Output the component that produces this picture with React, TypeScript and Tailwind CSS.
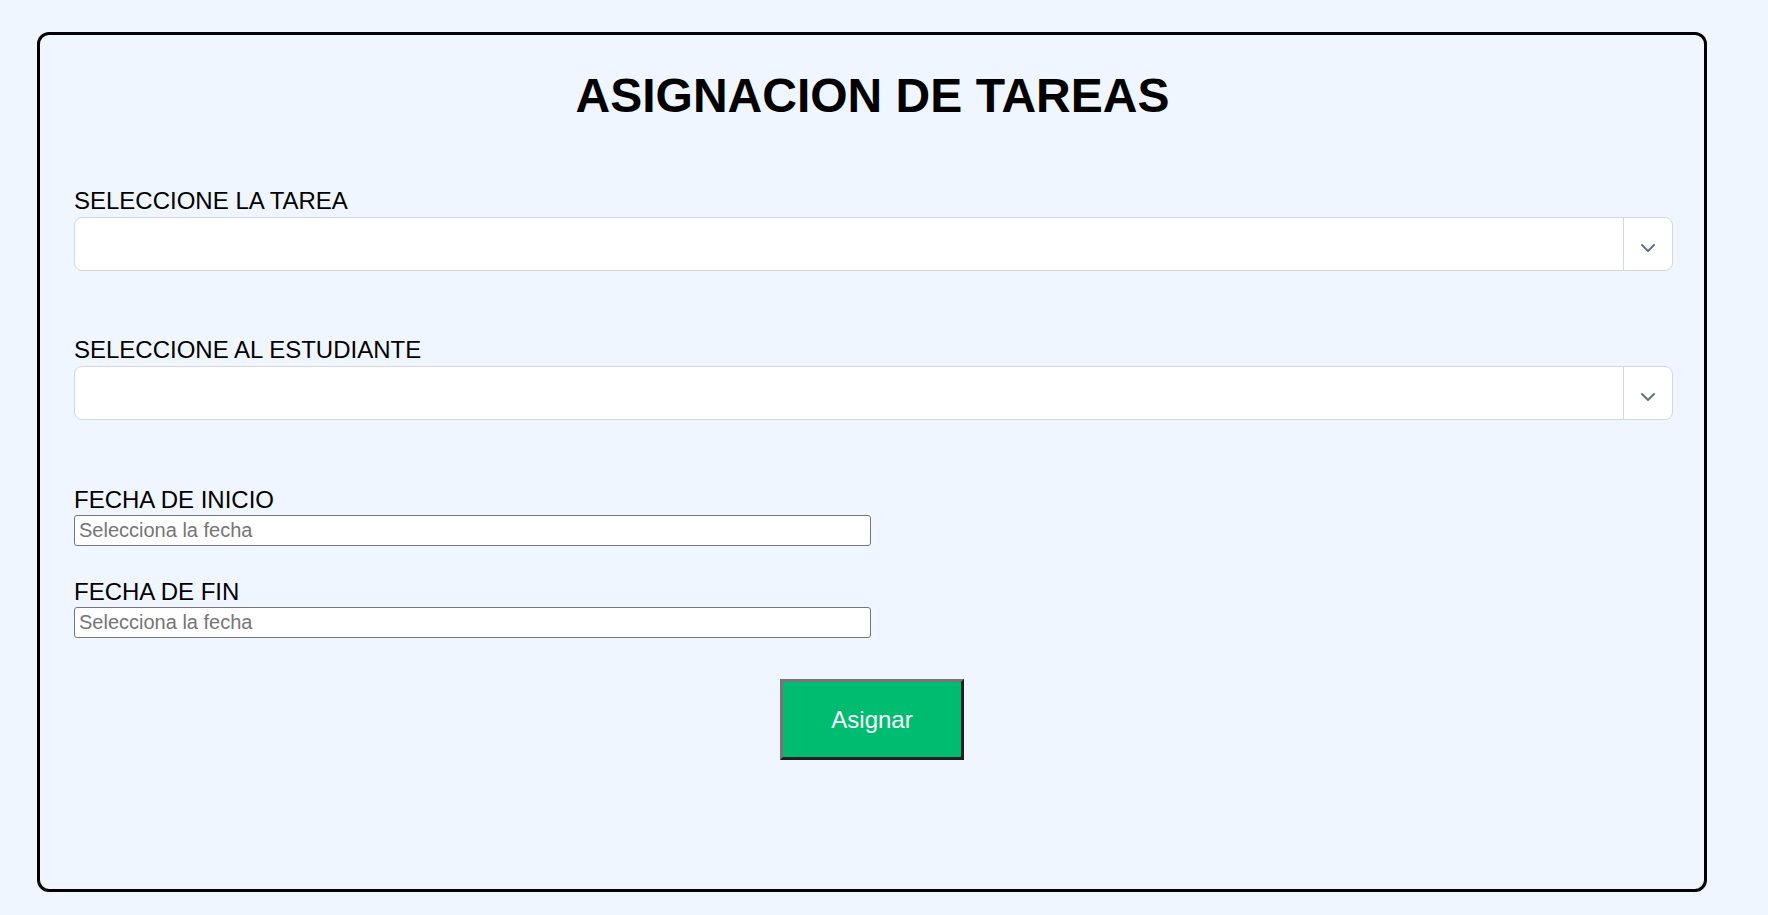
import React from "react";

function SelectBox() {
  return (
    <div className="flex h-[54px] w-full rounded-[8px] border border-[#d4d8de] bg-white">
      <div className="flex-1"></div>
      <div className="w-px bg-[#d4d8de]"></div>
      <div className="flex w-[48px] items-center justify-center pt-[8px]">
        <svg width="16" height="10" viewBox="0 0 16 10" fill="none">
          <path d="M2 2 L8 8 L14 2" stroke="#66708a" strokeWidth="2" strokeLinecap="round" strokeLinejoin="round" />
        </svg>
      </div>
    </div>
  );
}

function DateInput() {
  return (
    <input
      type="text"
      placeholder="Selecciona la fecha"
      className="block h-[31px] w-[797px] rounded-[3px] border-[1.5px] border-[#767676] bg-white px-[4px] text-[20px] text-black placeholder:text-[#757575] outline-none"
    />
  );
}

export default function App() {
  return (
    <div
      className="min-h-[915px] bg-[#eff6ff] pl-[37px] pt-[32px] pb-[23px]"
      style={{ fontFamily: '"Liberation Sans", Arial, sans-serif' }}
    >
      <div className="flex h-[860px] w-[1670px] flex-col rounded-[12px] border-[3px] border-black pl-[34px] pr-[31px]">
        <h1 className="mt-[33px] pr-[2px] text-center text-[48px] font-bold leading-[55px] text-black">
          ASIGNACION DE TAREAS
        </h1>

        <label className="mt-[64px] block text-[24px] leading-[28px] text-black">SELECCIONE LA TAREA</label>
        <div className="mt-[2px]">
          <SelectBox />
        </div>

        <label className="mt-[65px] block text-[24px] leading-[28px] text-black">SELECCIONE AL ESTUDIANTE</label>
        <div className="mt-[2px]">
          <SelectBox />
        </div>

        <label className="mt-[66px] block text-[24px] leading-[28px] text-black">FECHA DE INICIO</label>
        <div className="mt-[1px]">
          <DateInput />
        </div>

        <label className="mt-[32px] block text-[24px] leading-[28px] text-black">FECHA DE FIN</label>
        <div className="mt-[1px]">
          <DateInput />
        </div>

        <div className="mt-[41px] flex justify-center pr-[3px]">
          <button className="h-[81px] w-[184px] border-[3px] border-t-[#767676] border-l-[#767676] border-b-[#1f1f1f] border-r-[#1f1f1f] bg-[#00bc70] text-[24px] text-white">
            Asignar
          </button>
        </div>
      </div>
    </div>
  );
}
